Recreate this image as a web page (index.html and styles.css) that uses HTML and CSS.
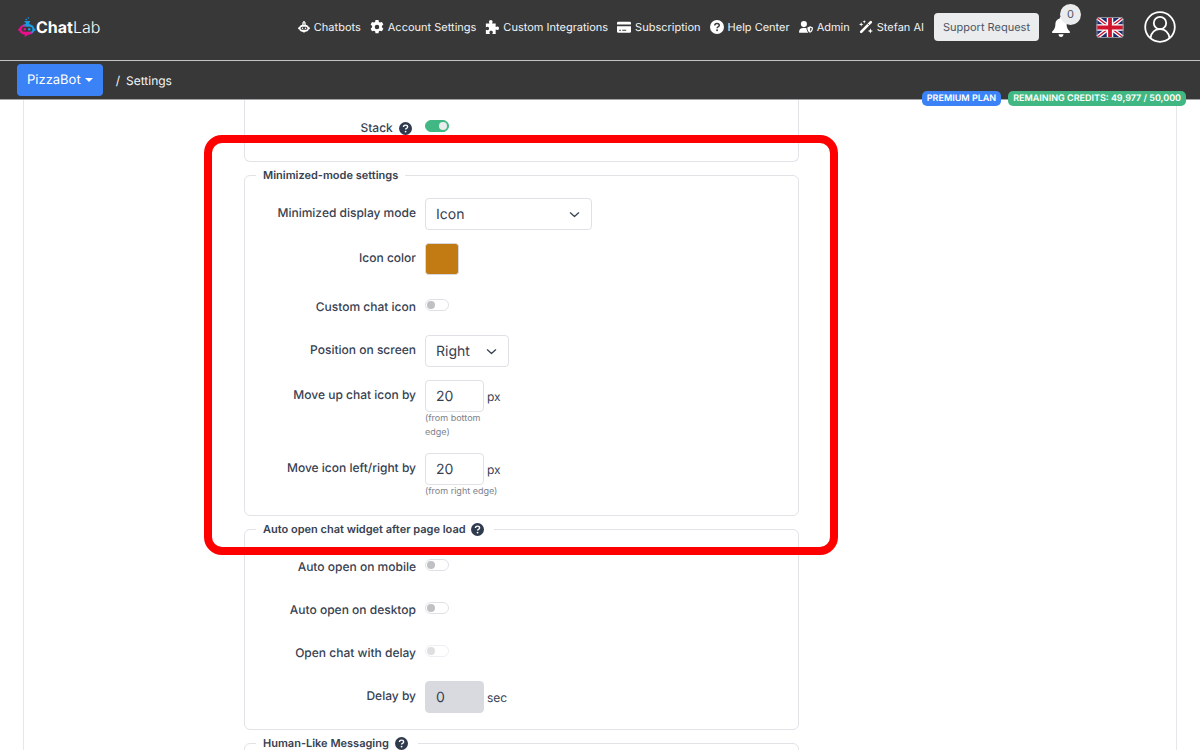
FILE: index.html
```html
<!DOCTYPE html>
<html lang="en">
<head>
    <meta charset="UTF-8">
    <meta name="viewport" content="width=device-width, initial-scale=1.0">
    <title>ChatLab - Settings</title>
    <link rel="stylesheet" href="styles.css">
</head>
<body>
    <svg class="sprite" aria-hidden="true">
        <symbol id="icon-help" viewBox="0 0 16 16">
            <circle cx="8" cy="8" r="8" fill="currentColor"/>
            <path class="mark" d="M5.5 6.300c0-1.500 1.100-2.400 2.500-2.400s2.600.8 2.600 2.200c0 1.800-2.500 1.700-2.500 3.200" fill="none" stroke-width="1.700"/>
            <circle class="dot" cx="8.100" cy="11.800" r="1.100"/>
        </symbol>
        <symbol id="icon-chevron" viewBox="0 0 16 16">
            <path d="M2 5.500l6 5.500 6-5.500" fill="none" stroke="currentColor" stroke-width="1.800" stroke-linecap="round" stroke-linejoin="round"/>
        </symbol>
    </svg>

    <div class="page">
        <header class="topbar">
            <a class="logo" href="#">
                <svg class="logo-icon" viewBox="0 0 18 20">
                    <defs>
                        <linearGradient id="logo-fill" x1="0" y1="1" x2="1" y2="0">
                            <stop offset="0.45" stop-color="#ec0c8e"/>
                            <stop offset="0.6" stop-color="#1a9be0"/>
                        </linearGradient>
                    </defs>
                    <path d="M6.500 4h5.500v1.200h-.8V7c3 .6 4.600 2.200 5 4.200 1.800.4 1.800 2.500 0 2.900-.8 2.300-3 3.500-5.900 3.700L6.600 20l.3-2.200c-2.800-.3-4.700-1.600-5.300-3.700-1.800-.4-1.800-2.500 0-2.900C2.100 9 4.600 7.300 7.700 7V5.200H6.500z" fill="url(#logo-fill)"/>
                    <rect x="3.700" y="9.800" width="10.600" height="5" rx="2.500" fill="#383838"/>
                    <circle cx="6.700" cy="12.300" r="1.200" fill="#ec0c8e"/>
                    <circle cx="11.300" cy="12.300" r="1.200" fill="#1a9be0"/>
                    <circle cx="8.200" cy="2.500" r=".8" fill="#1a9be0"/>
                    <circle cx="10.300" cy="1" r=".7" fill="#1a9be0"/>
                </svg>
                <span class="logo-text"><b>Chat</b>Lab</span>
            </a>
            <nav class="main-nav">
                <a href="#">
                    <svg class="icon-bot" viewBox="0 0 16 16"><path d="M6.500 6V2.500h3V6" fill="none" stroke="currentColor" stroke-width="1.400"/><path d="M7 0h2v2H7z" fill="currentColor"/><path fill="currentColor" fill-rule="evenodd" d="M8 4.500c3.500 0 5.600 1.500 6.200 3.600 2.300.3 2.300 2.900 0 3.200-.7 1.900-2.200 2.900-4.400 3.100L7.600 16l-.3-1.500c-3-.1-4.900-1.200-5.500-3.200-2.300-.3-2.300-2.900 0-3.200C2.400 6 4.500 4.500 8 4.500zM5.500 7.600a2.100 2.100 0 0 0 0 4.200h5a2.100 2.100 0 0 0 0-4.200z"/><circle cx="6" cy="9.700" r="1" fill="currentColor"/><circle cx="10" cy="9.700" r="1" fill="currentColor"/></svg>
                    Chatbots
                </a>
                <a href="#">
                    <svg viewBox="0 0 16 16"><path fill="currentColor" fill-rule="evenodd" d="M6.300 0h3.400l.5 2.200 1.200.7 2.200-.7 1.700 3-1.700 1.600v1.500l1.700 1.600-1.700 3-2.200-.7-1.200.7-.5 2.200H6.300l-.5-2.200-1.200-.7-2.200.7-1.700-3 1.700-1.600V6.800L.7 5.200l1.700-3 2.200.7 1.200-.7zM8 5.300a2.600 2.600 0 1 0 0 5.200 2.600 2.600 0 0 0 0-5.200z"/></svg>
                    Account Settings
                </a>
                <a href="#">
                    <svg viewBox="0 0 16 16"><path fill="currentColor" d="M1 4h4c.3-.6-.5-1-.5-2C4.500.8 5.400 0 6.600 0s2.100.8 2.100 2c0 1-.8 1.400-.5 2h4v4c.5.3 1-.6 2-.6 1.100 0 1.800.9 1.800 2s-.7 2.100-1.800 2.100c-1 0-1.500-.9-2-.5v5H8.500c-.4-.5.5-.9.500-1.900s-.8-1.700-2-1.700-2 .7-2 1.700.9 1.400.5 1.900H1v-4.700c.3-.5.9.3 1.900.3s1.700-.8 1.700-1.900-.7-1.900-1.700-1.900-1.600.8-1.900.4z"/></svg>
                    Custom Integrations
                </a>
                <a href="#">
                    <svg viewBox="0 0 16 16"><path fill="currentColor" fill-rule="evenodd" d="M1.500 2h13A1.500 1.500 0 0 1 16 3.500V5H0V3.500A1.500 1.500 0 0 1 1.500 2zM0 7h16v6a1.500 1.500 0 0 1-1.500 1.500h-13A1.500 1.500 0 0 1 0 13zm2.500 4v1.300h2V11zm3.500 0v1.300h4.500V11z"/></svg>
                    Subscription
                </a>
                <a href="#">
                    <svg class="help-light"><use href="#icon-help"/></svg>
                    Help Center
                </a>
                <a href="#">
                    <svg viewBox="0 0 16 16"><g fill="currentColor"><circle cx="5.600" cy="4.700" r="3.500"/><path d="M0 14c0-3 2-4.800 4.500-4.800h2.200c.8 0 1.500.2 2 .5 0 2 .7 3.600 2 4.800H.6c-.4 0-.6-.2-.6-.5z"/><path fill-rule="evenodd" d="m12.700 7.200 3.300 1.300c0 3-.9 5-3.300 6.200-2.300-1.200-3.200-3.200-3.200-6.200zm0 1.600v4.200c1.200-.9 1.800-2 1.900-3.500z"/></g></svg>
                    Admin
                </a>
                <a href="#">
                    <svg viewBox="0 0 16 16"><path d="M2.500 13.500l11-11" stroke="currentColor" stroke-width="3" stroke-linecap="round"/><path d="m9.800 4.300 2 2" stroke="#383838"/><path fill="currentColor" d="m6 0 .6 1.400L8 2l-1.400.6L6 4l-.6-1.400L4 2l1.400-.6zM2.500 2.500l.7 1.800 1.800.7-1.800.7-.7 1.800-.7-1.800L0 5l1.800-.7zM13 9.500l.8 2.200 2.200.8-2.200.8-.8 2.200-.8-2.200-2.200-.8 2.200-.8z"/></svg>
                    Stefan AI
                </a>
            </nav>
            <button class="support-btn" type="button">Support Request</button>
            <button class="bell" type="button" aria-label="Notifications">
                <svg viewBox="0 0 18 20"><path fill="currentColor" d="M9 0c.8 0 1.300.6 1.300 1.400 2.700.6 4.300 2.700 4.300 5.400 0 3.600.9 5.500 2.800 7.300.9.900.5 2-.6 2H1.200c-1.100 0-1.500-1.100-.6-2 1.900-1.800 2.800-3.700 2.800-7.300 0-2.700 1.600-4.800 4.300-5.400C7.700.6 8.200 0 9 0zM6.500 17.300h5C11.500 18.900 10.500 20 9 20s-2.500-1.100-2.500-2.700z"/></svg>
                <span class="bell-count">0</span>
            </button>
            <button class="flag" type="button" aria-label="Language">
                <svg viewBox="0 0 27 21"><rect width="27" height="21" rx="2" fill="#1b2a6b"/><path d="M1 1l25 19M26 1L1 20" stroke="#fff" stroke-width="4"/><path d="M1 1l25 19M26 1L1 20" stroke="#d0142c" stroke-width="1.500"/><path d="M13.500 0v21M0 10.500h27" stroke="#fff" stroke-width="6.500"/><path d="M13.500 0v21M0 10.500h27" stroke="#d0142c" stroke-width="3.800"/><rect x=".5" y=".5" width="26" height="20" rx="2" fill="none" stroke="#8a8f98"/></svg>
            </button>
            <button class="avatar" type="button" aria-label="Profile">
                <svg viewBox="0 0 32 32" fill="none" stroke="currentColor" stroke-width="1.800"><circle cx="16" cy="16" r="14.800"/><circle cx="16" cy="12" r="6.200"/><path d="M6.500 27c1-5.500 4.700-8.800 9.500-8.800s8.500 3.300 9.500 8.800"/></svg>
            </button>
        </header>

        <div class="subbar">
            <button class="bot-btn" type="button">PizzaBot</button>
            <span class="slash">/</span>
            <span>Settings</span>
            <div class="plan-badges">
                <span class="badge badge-plan">PREMIUM PLAN</span>
                <span class="badge badge-credits">REMAINING CREDITS: 49,977 / 50,000</span>
            </div>
        </div>

        <main class="panel">
            <form class="settings">
                <fieldset class="group group-open">
                    <div class="row row-toggle">
                        <label for="stack">Stack <svg class="help"><use href="#icon-help"/></svg></label>
                        <input class="toggle" type="checkbox" id="stack" checked>
                    </div>
                </fieldset>

                <div class="highlighted">
                    <fieldset class="group">
                        <legend>Minimized-mode settings</legend>
                        <div class="row">
                            <label for="display-mode">Minimized display mode</label>
                            <div class="select select-wide">
                                <select id="display-mode">
                                    <option>Icon</option>
                                </select>
                                <svg><use href="#icon-chevron"/></svg>
                            </div>
                        </div>
                        <div class="row row-color">
                            <label for="icon-color">Icon color</label>
                            <input class="color" type="color" id="icon-color" value="#c27a12">
                        </div>
                        <div class="row row-toggle">
                            <label for="custom-icon">Custom chat icon</label>
                            <input class="toggle" type="checkbox" id="custom-icon">
                        </div>
                        <div class="row">
                            <label for="position">Position on screen</label>
                            <div class="select">
                                <select id="position">
                                    <option>Right</option>
                                </select>
                                <svg><use href="#icon-chevron"/></svg>
                            </div>
                        </div>
                        <div class="row">
                            <label for="move-up">Move up chat icon by</label>
                            <div class="field">
                                <div class="with-unit">
                                    <input class="number" type="text" id="move-up" value="20">
                                    <span class="unit">px</span>
                                </div>
                                <small class="note">(from bottom edge)</small>
                            </div>
                        </div>
                        <div class="row">
                            <label for="move-side">Move icon left/right by</label>
                            <div class="field">
                                <div class="with-unit">
                                    <input class="number" type="text" id="move-side" value="20">
                                    <span class="unit">px</span>
                                </div>
                                <small class="note">(from right edge)</small>
                            </div>
                        </div>
                    </fieldset>
                    <div class="highlight"></div>
                </div>

                <fieldset class="group">
                    <legend class="has-help">Auto open chat widget after page load <svg class="help"><use href="#icon-help"/></svg></legend>
                    <div class="row row-toggle">
                        <label for="open-mobile">Auto open on mobile</label>
                        <input class="toggle" type="checkbox" id="open-mobile">
                    </div>
                    <div class="row row-toggle">
                        <label for="open-desktop">Auto open on desktop</label>
                        <input class="toggle" type="checkbox" id="open-desktop">
                    </div>
                    <div class="row row-toggle">
                        <label for="open-delay">Open chat with delay</label>
                        <input class="toggle" type="checkbox" id="open-delay" disabled>
                    </div>
                    <div class="row">
                        <label for="delay">Delay by</label>
                        <div class="with-unit">
                            <input class="number" type="text" id="delay" value="0" disabled>
                            <span class="unit">sec</span>
                        </div>
                    </div>
                </fieldset>

                <fieldset class="group">
                    <legend class="has-help">Human-Like Messaging <svg class="help"><use href="#icon-help"/></svg></legend>
                </fieldset>
            </form>
        </main>
    </div>
</body>
</html>
```

FILE: styles.css
```css
* {
    margin: 0;
    padding: 0;
    box-sizing: border-box;
}

body {
    font-family: Inter, "Liberation Sans", sans-serif;
    font-size: 12px;
    color: #374151;
    background: #fff;
    text-rendering: geometricPrecision;
}

button,
input,
select {
    font: inherit;
    color: inherit;
    text-rendering: inherit;
}

button {
    border: none;
    background: none;
    cursor: pointer;
}

.sprite {
    display: none;
}

.page {
    display: flex;
    flex-direction: column;
    height: 100vh;
    overflow: hidden;
}

/* Top bar */
.topbar {
    display: flex;
    align-items: center;
    flex-shrink: 0;
    height: 61px;
    padding: 0 24px 6px 18px;
    background: #383838;
    border-bottom: 1px solid #c4c4c6;
    color: #fff;
}

.logo {
    display: flex;
    align-items: center;
    margin-right: auto;
    color: #fff;
    text-decoration: none;
}

.logo-icon {
    width: 18px;
    height: 22px;
}

.logo-text {
    font-size: 16px;
    font-weight: 300;
}

.logo-text b {
    font-weight: 700;
}

.main-nav {
    display: flex;
    gap: 9px;
    font-size: 11px;
}

.main-nav a {
    display: flex;
    align-items: center;
    gap: 4px;
    color: #f3f4f6;
    text-decoration: none;
    white-space: nowrap;
}

.main-nav svg {
    width: 14px;
    height: 14px;
    color: #fff;
}

.main-nav .icon-bot {
    width: 12px;
}

.support-btn {
    height: 28px;
    margin-left: 10px;
    padding: 0 9px;
    border-radius: 4px;
    background: #ebecee;
    color: #4b5563;
    font-size: 11px;
}

.bell {
    position: relative;
    width: 18px;
    height: 20px;
    margin-left: 13px;
    color: #fff;
}

.bell svg,
.flag svg,
.avatar svg {
    display: block;
    width: 100%;
    height: 100%;
}

.bell-count {
    position: absolute;
    top: -13px;
    left: 8px;
    width: 21px;
    height: 21px;
    border-radius: 50%;
    background: #ebecee;
    color: #4b5563;
    font-size: 11px;
    line-height: 21px;
}

.flag {
    width: 28px;
    height: 21px;
    margin-left: 26px;
}

.avatar {
    width: 32px;
    height: 32px;
    margin-left: 20px;
    color: #fff;
}

/* Breadcrumb bar */
.subbar {
    position: relative;
    z-index: 1;
    display: flex;
    align-items: center;
    flex-shrink: 0;
    height: 39px;
    padding: 0 17px;
    background: #383838;
    border-bottom: 1px solid #a3a3a6;
    color: #f3f4f6;
}

.bot-btn {
    display: flex;
    align-items: center;
    gap: 4px;
    height: 32px;
    padding: 0 10px;
    border-radius: 4px;
    background: #3b82f6;
    color: #fff;
    font-size: 13px;
}

.bot-btn::after {
    content: "";
    border: 4px solid transparent;
    border-top-color: currentColor;
    border-bottom: none;
}

.slash {
    margin: 0 6px 0 13px;
}

.plan-badges {
    position: absolute;
    right: 14px;
    bottom: -7px;
    display: flex;
    gap: 7px;
}

.badge {
    height: 15px;
    padding: 0 5px;
    border-radius: 5px;
    color: #fff;
    font-size: 9px;
    font-weight: 600;
    line-height: 15px;
}

.badge-plan {
    background: #3b82f6;
}

.badge-credits {
    background: #41b883;
}

/* Settings form */
.panel {
    flex: 1;
    margin: 0 23px;
    border: solid #e5e7eb;
    border-width: 0 1px;
}

.settings {
    width: 555px;
    max-width: 100%;
    margin-left: 220px;
}

.group {
    min-width: 0;
    margin-bottom: 4px;
    padding: 14px 0 3px;
    border: 1px solid #e1e3e7;
    border-radius: 6px;
}

.group-open {
    padding: 13px 0 5px;
    border-top: none;
    border-radius: 0 0 6px 6px;
}

legend {
    margin-left: 11px;
    padding: 0 7px;
    font-size: 11px;
    font-weight: 600;
    line-height: 18px;
}

.has-help {
    padding-right: 10px;
}

.help {
    width: 13px;
    height: 13px;
    margin-left: 3px;
    color: #2f3b4d;
    vertical-align: -3px;
}

.row .help {
    margin-right: 4px;
}

.help-light {
    --mark-color: #383838;
}

.mark {
    stroke: var(--mark-color, #fff);
}

.dot {
    fill: var(--mark-color, #fff);
}

.row {
    display: grid;
    grid-template-columns: 171px 1fr;
    gap: 9px;
    align-items: start;
    min-height: 32px;
    margin-bottom: 13px;
}

.row label {
    padding-top: 7px;
    font-weight: 500;
    line-height: 16px;
    text-align: right;
}

.row-toggle {
    height: 30px;
    min-height: 0;
}

.row-color {
    min-height: 36px;
}

.select {
    position: relative;
    width: 84px;
}

.select-wide {
    width: 167px;
}

.select select {
    appearance: none;
    width: 100%;
    height: 32px;
    padding: 0 10px;
    border: 1px solid #dfe1e6;
    border-radius: 4px;
    background: #fff;
    font-size: 14px;
}

.select svg {
    position: absolute;
    top: 11px;
    right: 12px;
    width: 11px;
    height: 11px;
    pointer-events: none;
}

.color {
    appearance: none;
    width: 34px;
    height: 32px;
    border: 1px solid #d5d8dd;
    border-radius: 4px;
    background: #c27a12;
}

.color::-webkit-color-swatch-wrapper {
    padding: 0;
}

.color::-webkit-color-swatch {
    border: none;
    border-radius: 3px;
}

.toggle {
    appearance: none;
    display: flex;
    align-items: center;
    width: 24px;
    height: 12px;
    margin-top: 7px;
    padding: 0 1px;
    border: 1px solid #dfe1e6;
    border-radius: 6px;
    background: #fff;
}

.toggle::before {
    content: "";
    width: 8px;
    height: 8px;
    border-radius: 50%;
    background: #bfc1c5;
}

.toggle:checked {
    justify-content: flex-end;
    border-color: #41b883;
    background: #41b883;
}

.toggle:checked::before {
    background: #ebecee;
}

.toggle:disabled {
    opacity: 0.5;
}

.with-unit {
    display: flex;
    align-items: center;
    gap: 3px;
}

.number {
    width: 59px;
    height: 32px;
    padding: 0 10px;
    border: 1px solid #dfe1e6;
    border-radius: 4px;
    background: #fff;
    font-size: 14px;
}

.number:disabled {
    border-color: #d9dadf;
    background: #d9dadf;
}

.field {
    width: 75px;
}

.note {
    display: block;
    color: #7b818c;
    font-size: 9px;
    line-height: 14px;
}

/* Red marker around the group, drawn over its neighbours */
.highlighted {
    position: relative;
}

.highlight {
    position: absolute;
    inset: -31px -39px -39px -40px;
    z-index: 1;
    border: 8px solid #f00;
    border-radius: 18px;
    pointer-events: none;
}
```
